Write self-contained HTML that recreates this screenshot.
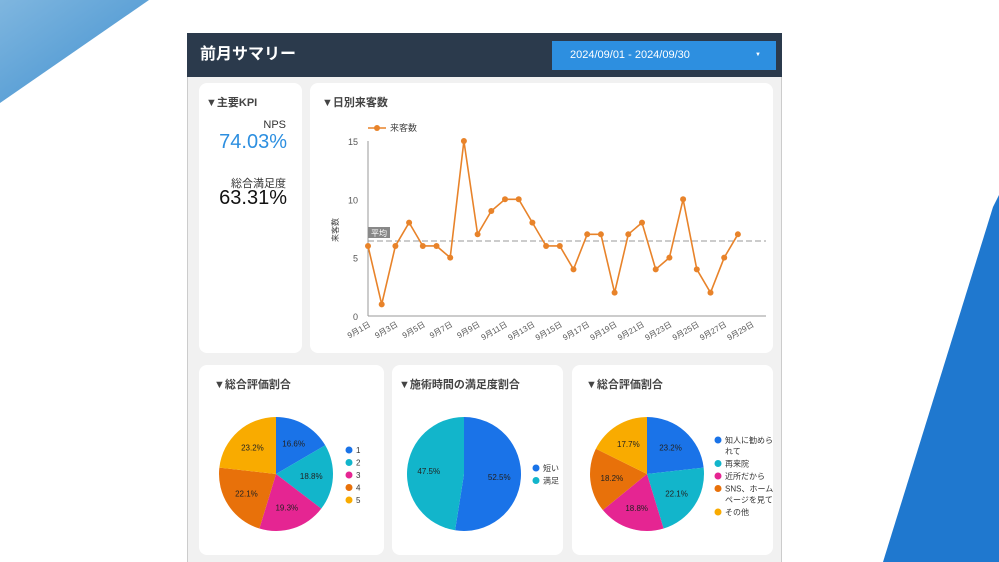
<!DOCTYPE html>
<html><head><meta charset="utf-8"><style>
*{margin:0;padding:0;box-sizing:border-box}
body{width:999px;height:562px;overflow:hidden;background:#fff;position:relative;font-family:"Liberation Sans","Noto Sans CJK JP",sans-serif}
.abs{position:absolute}
.card{position:absolute;background:#fff;border-radius:8px}
.t{position:absolute;font-size:11px;font-weight:bold;color:#444}
</style></head><body>
<svg class="abs" style="left:0;top:0" width="999" height="562">
<defs><linearGradient id="g1" x1="0" y1="0" x2="1" y2="1"><stop offset="0" stop-color="#7fb6df"/><stop offset="1" stop-color="#3f8fcf"/></linearGradient></defs>
<polygon points="0,0 149,0 0,103" fill="url(#g1)"/>
<polygon points="993,207 999,195 999,562 883,562" fill="#1f78cf"/>
</svg>
<div class="abs" style="left:187px;top:33px;width:595px;height:529px;background:#f1f1f1;border-left:1px solid #ccc;border-right:1px solid #ccc"></div>
<div class="abs" style="left:187px;top:33px;width:595px;height:44px;background:#2b3a4c"></div>
<div class="abs" style="left:200px;top:40px;color:#fff;font-size:16px;font-weight:bold">前月サマリー</div>
<div class="abs" style="left:552px;top:41px;width:224px;height:29px;background:#2d8fe0;color:#fff;font-size:11px;line-height:29px;padding-left:18px">2024/09/01 - 2024/09/30<span style="position:absolute;left:203px;font-size:6px">▼</span></div>

<div class="card" style="left:199px;top:83px;width:103px;height:270px"></div>
<div class="t" style="left:206px;top:94px">▼主要KPI</div>
<div class="abs" style="left:200px;width:86px;top:119px;text-align:right;font-size:11px;color:#333">NPS</div>
<div class="abs" style="left:200px;width:87px;top:131px;text-align:right;font-size:20px;color:#2d8fe0">74.03%</div>
<div class="abs" style="left:200px;width:86px;top:175px;text-align:right;font-size:11px;color:#333">総合満足度</div>
<div class="abs" style="left:200px;width:87px;top:187px;text-align:right;font-size:20px;color:#111">63.31%</div>

<div class="card" style="left:310px;top:83px;width:463px;height:270px"></div>
<div class="t" style="left:322px;top:94px">▼日別来客数</div>

<div class="card" style="left:199px;top:365px;width:185px;height:190px"></div>
<div class="t" style="left:214px;top:376px">▼総合評価割合</div>
<div class="card" style="left:392px;top:365px;width:171px;height:190px"></div>
<div class="t" style="left:399px;top:376px">▼施術時間の満足度割合</div>
<div class="card" style="left:572px;top:365px;width:201px;height:190px"></div>
<div class="t" style="left:586px;top:376px">▼総合評価割合</div>

<svg id="s" class="abs" style="left:0;top:0" width="999" height="562" font-family="Liberation Sans,Noto Sans CJK JP,sans-serif"></svg>
<script>
var s=document.getElementById('s'),h='';
var X0=368,Y0=316,ky=11.67,kx=13.7;
h+='<line x1="368" y1="141" x2="368" y2="316" stroke="#999"/><line x1="368" y1="316" x2="766" y2="316" stroke="#999"/>';
[0,5,10,15].forEach(function(v){h+='<text x="358" y="'+(Y0-v*ky+4)+'" font-size="9" fill="#555" text-anchor="end">'+v+'</text>'});
h+='<line x1="368" y1="241" x2="766" y2="241" stroke="#999" stroke-dasharray="6,3"/>';
h+='<rect x="368" y="227" width="22" height="11" fill="#888"/><text x="371" y="236" font-size="8" fill="#fff">平均</text>';
h+='<text x="338" y="230" font-size="8" fill="#444" transform="rotate(-90 338 230)" text-anchor="middle">来客数</text>';
h+='<line x1="368" y1="128" x2="386" y2="128" stroke="#e8832a" stroke-width="1.5"/><circle cx="377" cy="128" r="3" fill="#e8832a"/><text x="390" y="131" font-size="9" fill="#444">来客数</text>';
var d=[6,1,6,8,6,6,5,15,7,9,10,10,8,6,6,4,7,7,2,7,8,4,5,10,4,2,5,7],p='';
d.forEach(function(v,i){p+=(i?'L':'M')+(X0+i*kx)+','+(Y0-v*ky)});
h+='<path d="'+p+'" fill="none" stroke="#e8832a" stroke-width="1.6"/>';
d.forEach(function(v,i){h+='<circle cx="'+(X0+i*kx)+'" cy="'+(Y0-v*ky)+'" r="3" fill="#e8832a"/>'});
for(var i=1;i<=29;i+=2){var x=X0+(i-1)*kx+3;h+='<text x="'+x+'" y="326" font-size="8" fill="#555" text-anchor="end" transform="rotate(-30 '+x+' 326)">9月'+i+'日</text>'}
var C=['#1a73e8','#12b5cb','#e52592','#e8710a','#f9ab00'];
function pie(cx,cy,r,vals,lab){var a=0;vals.forEach(function(v,i){var a2=a+v/100*2*Math.PI;
var x1=cx+r*Math.sin(a),y1=cy-r*Math.cos(a),x2=cx+r*Math.sin(a2),y2=cy-r*Math.cos(a2);
h+='<path d="M'+cx+','+cy+'L'+x1+','+y1+'A'+r+','+r+' 0 '+((a2-a)>Math.PI?1:0)+' 1 '+x2+','+y2+'Z" fill="'+C[i]+'"/>';
var m=(a+a2)/2,lr=r*0.62;h+='<text x="'+(cx+lr*Math.sin(m))+'" y="'+(cy-lr*Math.cos(m)+3)+'" font-size="8" fill="#222" text-anchor="middle">'+v+'%</text>';a=a2})}
pie(276,474,57,[16.6,18.8,19.3,22.1,23.2]);
pie(464,474,57,[52.5,47.5]);
pie(647,474,57,[23.2,22.1,18.8,18.2,17.7]);
function leg(x,y,items,gap){var yy=y;items.forEach(function(t,i){h+='<circle cx="'+x+'" cy="'+yy+'" r="3.5" fill="'+C[i]+'"/>';
t.split('|').forEach(function(l,j){h+='<text x="'+(x+7)+'" y="'+(yy+3+j*11)+'" font-size="8" fill="#333">'+l+'</text>'});yy+=gap+(t.split('|').length-1)*11});}
leg(349,450,['1','2','3','4','5'],12.5);
leg(536,468,['短い','満足'],12.5);
leg(718,440,['知人に勧めら|れて','再来院','近所だから','SNS、ホーム|ページを見て','その他'],12.5);
s.innerHTML=h;
</script>
</body></html>
